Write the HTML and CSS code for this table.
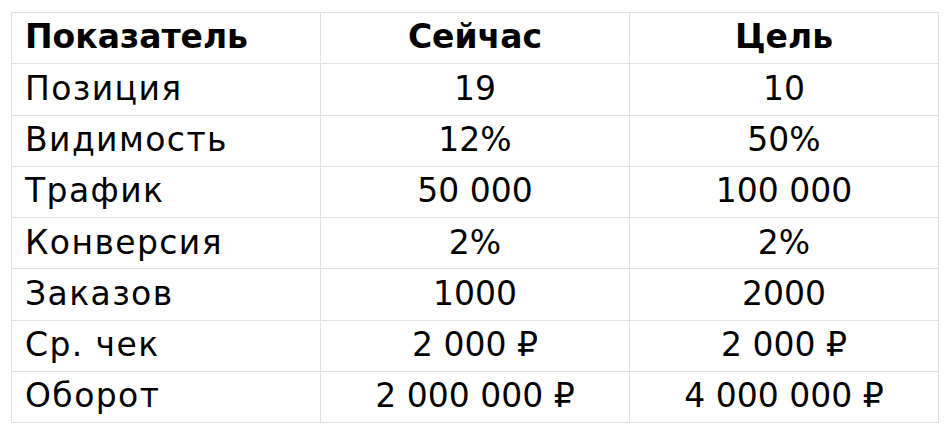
FILE: index.html
```html
<!DOCTYPE html>
<html lang="ru">
<head>
<meta charset="utf-8">
<link rel="stylesheet" href="styles.css">
</head>
<body>
<table class="metrics">
  <thead>
    <tr><th class="name">Показатель</th><th>Сейчас</th><th>Цель</th></tr>
  </thead>
  <tbody>
    <tr><td class="name">Позиция</td><td>19</td><td>10</td></tr>
    <tr><td class="name">Видимость</td><td>12%</td><td>50%</td></tr>
    <tr><td class="name">Трафик</td><td>50 000</td><td>100 000</td></tr>
    <tr><td class="name">Конверсия</td><td>2%</td><td>2%</td></tr>
    <tr><td class="name">Заказов</td><td>1000</td><td>2000</td></tr>
    <tr><td class="name">Ср. чек</td><td>2 000 ₽</td><td>2 000 ₽</td></tr>
    <tr><td class="name">Оборот</td><td>2 000 000 ₽</td><td>4 000 000 ₽</td></tr>
  </tbody>
</table>
</body>
</html>
```
FILE: styles.css
```css
html, body {
  margin: 0;
  padding: 0;
  background: #ffffff;
}
body {
  padding: 12px 0 0 11px;
  font-family: "DejaVu Sans", sans-serif;
  color: #000000;
}
.metrics {
  border-collapse: collapse;
  table-layout: fixed;
  width: 928px;
}
.metrics th,
.metrics td {
  border: 1px solid #e0e0e0;
  height: 51.25px;
  padding: 0 13px 2px;
  box-sizing: border-box;
  font-size: 33px;
  line-height: 1;
  text-align: center;
  vertical-align: middle;
  white-space: nowrap;
}
.metrics th {
  font-weight: bold;
  padding-bottom: 3px;
}
.metrics td {
  font-weight: normal;
}
.metrics .name {
  text-align: left;
}
.metrics td.name {
  letter-spacing: 1.4px;
}
```
